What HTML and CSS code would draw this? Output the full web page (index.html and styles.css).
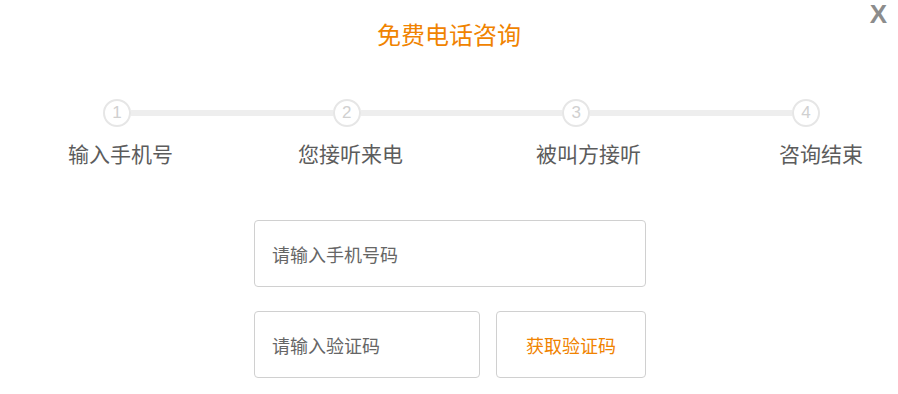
FILE: index.html
```html
<!DOCTYPE html>
<html lang="zh-CN">
<head>
<meta charset="utf-8">
<title>免费电话咨询</title>
<link rel="stylesheet" href="styles.css">
</head>
<body>
<div class="dialog">
  <span class="close">X</span>
  <h1 class="title">免费电话咨询</h1>
  <div class="steps">
    <span class="step-dot">1</span>
    <span class="step-line"></span>
    <span class="step-dot">2</span>
    <span class="step-line"></span>
    <span class="step-dot">3</span>
    <span class="step-line"></span>
    <span class="step-dot">4</span>
  </div>
  <div class="step-labels">
    <span>输入手机号</span>
    <span>您接听来电</span>
    <span>被叫方接听</span>
    <span>咨询结束</span>
  </div>
  <form class="form">
    <input class="field field-phone" type="text" placeholder="请输入手机号码">
    <div class="form-row">
      <input class="field field-code" type="text" placeholder="请输入验证码">
      <button class="code-btn" type="button">获取验证码</button>
    </div>
  </form>
</div>
</body>
</html>
```
FILE: styles.css
```css
html, body {
  margin: 0;
  padding: 0;
  background: #fff;
}
body {
  font-family: "Noto Sans CJK SC", "Noto Sans", sans-serif;
}
.dialog {
  position: relative;
  width: 898px;
  height: 394px;
  overflow: hidden;
}
.close {
  position: absolute;
  top: 1px;
  right: 11px;
  padding-top: 2px;
  font-family: "Liberation Sans", Arial, sans-serif;
  font-weight: bold;
  font-size: 26px;
  line-height: 22px;
  color: #8c8c8c;
}
.title {
  margin: 0;
  padding-top: 18px;
  text-align: center;
  font-size: 24px;
  line-height: 32px;
  font-weight: normal;
  color: #f08300;
}
.steps {
  display: flex;
  align-items: center;
  margin: 49px 0 0 103px;
  width: 717px;
}
.step-dot {
  box-sizing: border-box;
  flex: 0 0 28px;
  width: 28px;
  height: 28px;
  border: 2px solid #e6e6e6;
  border-radius: 50%;
  display: flex;
  align-items: center;
  justify-content: center;
  font-family: "Liberation Sans", Arial, sans-serif;
  font-size: 17px;
  color: #d0d0d0;
}
.step-line {
  flex: 1;
  height: 6px;
  background: #eeeeee;
}
.step-labels {
  display: grid;
  grid-template-columns: 230px 238px 243px auto;
  margin: 13px 0 0 68px;
  font-size: 21px;
  line-height: 26px;
  color: #5c5c5c;
  white-space: nowrap;
}
.form {
  margin: 54px 0 0 254px;
  width: 392px;
  display: flex;
  flex-direction: column;
  gap: 24px;
}
.form-row {
  display: flex;
  gap: 16px;
}
.field {
  box-sizing: border-box;
  height: 67px;
  border: 1px solid #d0d0d0;
  border-radius: 4px;
  padding: 0 0 0 17px;
  margin: 0;
  font-family: "Noto Sans CJK SC", "Noto Sans", sans-serif;
  font-size: 18px;
  color: #333;
  outline: none;
  background: #fff;
}
.field::placeholder {
  color: #666;
}
.field-phone {
  width: 392px;
}
.field-code {
  width: 226px;
}
.code-btn {
  box-sizing: border-box;
  width: 150px;
  height: 67px;
  border: 1px solid #d0d0d0;
  border-radius: 4px;
  background: #fff;
  margin: 0;
  padding: 0;
  font-family: "Noto Sans CJK SC", "Noto Sans", sans-serif;
  font-size: 18px;
  color: #f08300;
}
```
